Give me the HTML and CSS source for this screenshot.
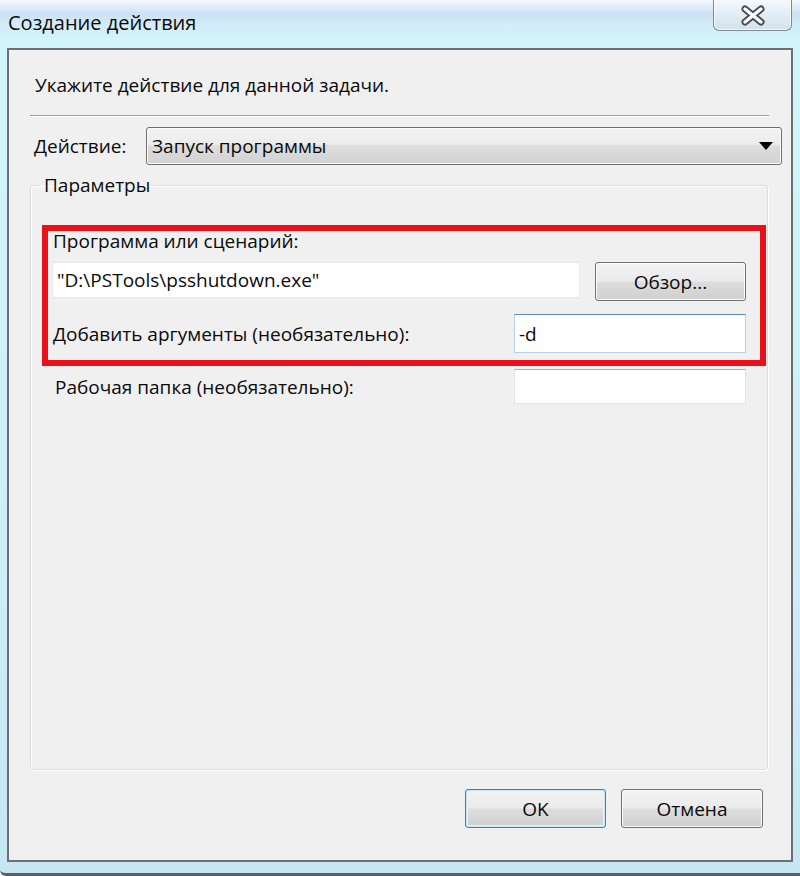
FILE: index.html
```html
<!DOCTYPE html>
<html lang="ru">
<head>
    <meta charset="UTF-8">
    <meta name="viewport" content="width=device-width, initial-scale=1.0">
    <title>Создание действия</title>
    <link rel="stylesheet" href="styles.css">
</head>
<body>
    <div class="window">
        <!-- Title bar -->
        <div class="titlebar">
            <span class="title">Создание действия</span>
            <button class="close-btn" aria-label="Закрыть">
                <svg width="24" height="21" viewBox="0 0 24 21">
                    <path d="M4 4 L20 17 M20 4 L4 17" stroke="#454a52" stroke-width="7" stroke-linecap="round" fill="none"/>
                    <path d="M4 4 L20 17 M20 4 L4 17" stroke="#ffffff" stroke-width="3.5" stroke-linecap="round" fill="none"/>
                </svg>
            </button>
        </div>

        <div class="client">
            <div class="instruction">Укажите действие для данной задачи.</div>
            <div class="separator"></div>

            <div class="action-row">
                <label class="action-label" for="action">Действие:</label>
                <div class="combo" id="action">
                    <span>Запуск программы</span>
                    <span class="combo-arrow"></span>
                </div>
            </div>

            <fieldset class="params">
                <legend>Параметры</legend>

                <!-- Highlighted block -->
                <div class="highlight">
                    <div class="field-label">Программа или сценарий:</div>
                    <div class="program-row">
                        <div class="textbox program-box">"D:\PSTools\psshutdown.exe"</div>
                        <button class="win-btn browse-btn">Обзор...</button>
                    </div>
                    <div class="arg-row">
                        <span class="row-label">Добавить аргументы (необязательно):</span>
                        <div class="textbox side-box focused">-d</div>
                    </div>
                </div>

                <div class="work-row">
                    <span class="row-label">Рабочая папка (необязательно):</span>
                    <div class="textbox side-box"></div>
                </div>
            </fieldset>

            <div class="buttons">
                <button class="win-btn ok-btn">OK</button>
                <button class="win-btn cancel-btn">Отмена</button>
            </div>
        </div>
    </div>
</body>
</html>
```

FILE: styles.css
```css
* {
    box-sizing: border-box;
}

body {
    margin: 0;
    font-family: "Open Sans", "Noto Sans", sans-serif;
    color: #0a0a0a;
}

.window {
    width: 800px;
    height: 876px;
    display: flex;
    flex-direction: column;
    background: linear-gradient(180deg, #f4f9fc 0px, #cbe1f3 14px, #d3ebf8 24px, #d2f5fc 40px, #d0eef8 60%, #c6e6f4 100%);
    border-bottom: 3px solid #5c6066;
    border-bottom-left-radius: 6px;
    overflow: hidden;
}

/* Title bar */
.titlebar {
    height: 48px;
    display: flex;
    align-items: flex-start;
    padding-left: 8px;
    flex-shrink: 0;
}

.title {
    font-size: 20px;
    line-height: 46px;
}

.close-btn {
    margin-left: auto;
    margin-right: 8px;
    width: 79px;
    height: 32px;
    margin-top: -1px;
    border: 1px solid #7f8a96;
    border-top: none;
    border-radius: 0 0 6px 6px;
    background: linear-gradient(180deg, #f6fafd 0%, #e2edf5 50%, #d2e1ec 100%);
    box-shadow: inset 0 0 0 1px rgba(255, 255, 255, 0.7);
    display: flex;
    align-items: center;
    justify-content: center;
    padding: 2px 0 0 0;
}

/* Client area */
.client {
    height: 814px;
    margin: 0 7px;
    background: #f0f0f0;
    border: 2px solid #6b6e72;
    flex-shrink: 0;
    display: flex;
    flex-direction: column;
}

.instruction {
    font-size: 19px;
    line-height: 28px;
    margin: 21px 0 0 26px;
}

.separator {
    height: 2px;
    margin: 16px 22px 0 21px;
    border-top: 1px solid #a0a0a0;
    border-bottom: 1px solid #ffffff;
}

.action-row {
    display: flex;
    align-items: center;
    margin-top: 10px;
    margin-left: 25px;
}

.action-label {
    width: 112px;
    font-size: 19px;
}

.combo {
    width: 636px;
    height: 38px;
    border: 1px solid #707070;
    border-radius: 3px;
    background: linear-gradient(180deg, #f3f3f3 0%, #ececec 45%, #dddddd 50%, #d2d2d2 100%);
    box-shadow: inset 0 0 0 1px #fcfcfc;
    display: flex;
    align-items: center;
    justify-content: space-between;
    padding: 0 8px 0 5px;
    font-size: 19px;
}

.combo-arrow {
    width: 0;
    height: 0;
    border-left: 7px solid transparent;
    border-right: 7px solid transparent;
    border-top: 8px solid #000;
}

/* Parameters group */
.params {
    margin: 6px 23px 0 21px;
    padding: 0;
    height: 599px;
    border: 1px solid #d5dfe5;
    border-radius: 4px;
    box-shadow: inset 1px 1px 0 #ffffff, 1px 1px 0 #ffffff;
    min-inline-size: 0;
}

.params legend {
    font-size: 19px;
    line-height: 28px;
    margin-left: 10px;
    padding: 0 3px;
}

.highlight {
    margin: 26px 1px 0 11px;
    border: 6px solid #e8101a;
    padding: 0 14px 7px 4px;
}

.field-label {
    font-size: 19px;
    line-height: 20px;
    padding-left: 1px;
}

.program-row {
    display: flex;
    align-items: flex-start;
    gap: 15px;
    margin-top: 11px;
}

.textbox {
    background: #fff;
    border: 1px solid #e2e3ea;
    border-top-color: #abadb3;
    font-size: 19px;
    display: flex;
    align-items: center;
    padding: 0 4px;
}

.program-box {
    width: 528px;
    height: 36px;
    border-color: #e8e8ec;
}

.side-box {
    width: 232px;
    height: 39px;
    margin-left: auto;
}

.side-box.focused {
    border: 1px solid #b8cfe4;
    border-top-color: #5d8ab5;
}

.win-btn {
    font-family: "Open Sans", "Noto Sans", sans-serif;
    font-size: 19px;
    color: #0a0a0a;
    border: 1px solid #707070;
    border-radius: 3px;
    background: linear-gradient(180deg, #f2f2f2 0%, #ebebeb 48%, #dddddd 52%, #cfcfcf 100%);
    box-shadow: inset 0 0 0 1px #fcfcfc;
    padding: 0;
}

.browse-btn {
    width: 151px;
    height: 39px;
}

.arg-row {
    display: flex;
    align-items: center;
    margin-top: 13px;
}

.row-label {
    font-size: 19px;
    padding-left: 1px;
}

.work-row {
    display: flex;
    align-items: center;
    margin: 3px 21px 0 23px;
}

.work-row .side-box {
    height: 35px;
}

/* Bottom buttons */
.buttons {
    display: flex;
    justify-content: flex-end;
    gap: 15px;
    margin: 19px 28px 0 0;
}

.ok-btn {
    width: 141px;
    height: 39px;
    border-color: #3c7fb1;
    box-shadow: inset 0 0 0 1px #c8e6f8, inset 0 0 0 2px #e4f2fb;
}

.cancel-btn {
    width: 142px;
    height: 39px;
}
```
